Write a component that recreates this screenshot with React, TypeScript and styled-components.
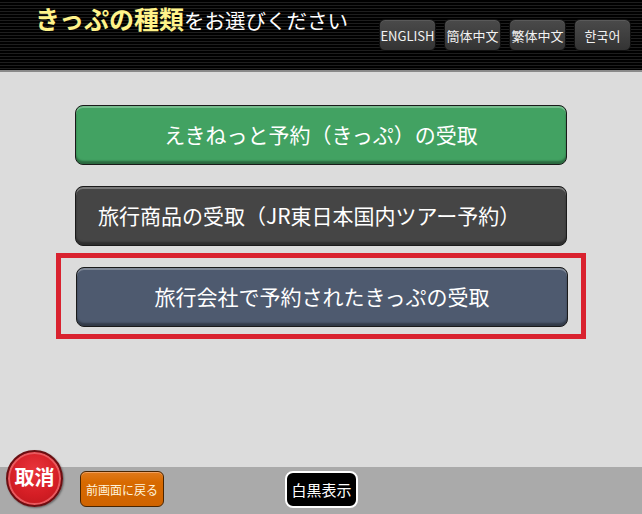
import { createGlobalStyle, styled } from 'styled-components';

const GlobalStyle = createGlobalStyle`
  html, body {
    margin: 0;
    padding: 0;
    background: #dcdcdc;
  }
  body {
    font-family: "Noto Sans CJK JP", "Noto Sans", sans-serif;
  }
  * { box-sizing: border-box; }
`;

const Screen = styled.div`
  width: 642px;
  height: 514px;
  display: flex;
  flex-direction: column;
  overflow: hidden;
`;

const Header = styled.header`
  height: 72px;
  flex: none;
  display: flex;
  justify-content: space-between;
  align-items: flex-start;
  padding: 0 11px 0 35px;
  background:
    repeating-linear-gradient(to bottom, #000 0px, #000 2px, #1e1e1e 2px, #1e1e1e 3px);
  border-bottom: 2px solid #8a8a8a;
`;

const Title = styled.h1`
  margin: 0;
  padding-top: 2px;
  font-weight: normal;
  font-size: 20.5px;
  color: #fff;
  line-height: 32px;
  white-space: nowrap;
  b {
    font-size: 25px;
    color: #fff38a;
    font-weight: bold;
  }
`;

const LangBar = styled.div`
  display: flex;
  gap: 8px;
  margin-top: 19px;
`;

const LangButton = styled.button`
  width: 57px;
  height: 32px;
  padding: 0;
  border: 1px solid #111;
  border-radius: 6px;
  background: linear-gradient(to bottom, #4a4a4a 0%, #3d3d3d 60%, #333 100%);
  box-shadow: inset 0 1px 0 #5a5a5a;
  color: #f2f2f2;
  font-family: "Noto Sans CJK JP", "Noto Sans CJK KR", sans-serif;
  font-size: 13px;
  white-space: nowrap;
`;

const Body = styled.main`
  flex: 1;
  display: flex;
  flex-direction: column;
  align-items: center;
  padding-top: 33px;
`;

const MenuButton = styled.button<{ $bg: string; $left?: boolean }>`
  width: 492px;
  height: 60px;
  flex: none;
  border: 1px solid #1a1a1a;
  border-radius: 8px;
  background: ${p => p.$bg};
  box-shadow: inset 0 2px 0 rgba(255, 255, 255, 0.28), inset 0 -3px 2px rgba(0, 0, 0, 0.35);
  color: #fff;
  font-family: "Noto Sans CJK JP", sans-serif;
  font-size: 21px;
  text-align: ${p => (p.$left ? 'left' : 'center')};
  padding: 0 0 2px ${p => (p.$left ? '22px' : '0')};
  white-space: nowrap;
`;

const Gap = styled.div<{ $h: number }>`
  height: ${p => p.$h}px;
  flex: none;
`;

const Highlight = styled.div`
  width: 530px;
  border: 5px solid #d9222f;
  padding: 9px 13px 7px 15px;
`;

const Footer = styled.footer`
  height: 47px;
  flex: none;
  background: #aaaaaa;
  display: flex;
  align-items: flex-start;
  padding-left: 6px;
`;

const CancelButton = styled.button`
  width: 57px;
  height: 57px;
  margin-top: -17px;
  flex: none;
  border-radius: 50%;
  border: 2px solid #6a0f12;
  background: radial-gradient(circle at 50% 35%, #e8353c 0%, #d51e25 55%, #b8151b 100%);
  box-shadow: inset 0 0 0 2px #e85a5f, 1px 1px 2px rgba(0, 0, 0, 0.4);
  color: #fff;
  font-family: "Noto Sans CJK JP", sans-serif;
  font-weight: bold;
  font-size: 20px;
  padding: 0 0 4px;
  white-space: nowrap;
`;

const BackButton = styled.button`
  width: 84px;
  height: 36px;
  margin: 4px 0 0 17px;
  border: 1px solid #4a2500;
  border-radius: 6px;
  background: linear-gradient(to bottom, #e07a1c 0%, #d86a00 30%, #cf6300 100%);
  box-shadow: inset 0 1px 0 #f0a060;
  color: #fff4dc;
  font-family: "Noto Sans CJK JP", sans-serif;
  font-size: 12px;
  padding: 0;
  white-space: nowrap;
`;

const MonoButton = styled.button`
  width: 73px;
  height: 37px;
  margin: 4px 0 0 121px;
  border: 2px solid #fff;
  border-radius: 8px;
  background: #000;
  color: #fff;
  font-family: "Noto Sans CJK JP", sans-serif;
  font-size: 15px;
  padding: 0 0 1px;
  white-space: nowrap;
`;

const languages = ['ENGLISH', '簡体中文', '繁体中文', '한국어'];

export default function App() {
  return (
    <Screen>
      <GlobalStyle />
      <Header>
        <Title>
          <b>きっぷの種類</b>をお選びください
        </Title>
        <LangBar>
          {languages.map(l => (
            <LangButton key={l}>{l}</LangButton>
          ))}
        </LangBar>
      </Header>
      <Body>
        <MenuButton $bg="#42a262">えきねっと予約（きっぷ）の受取</MenuButton>
        <Gap $h={21} />
        <MenuButton $bg="#454545" $left>旅行商品の受取（JR東日本国内ツアー予約）</MenuButton>
        <Gap $h={7} />
        <Highlight>
          <MenuButton $bg="#4e5a6f">旅行会社で予約されたきっぷの受取</MenuButton>
        </Highlight>
      </Body>
      <Footer>
        <CancelButton>取消</CancelButton>
        <BackButton>前画面に戻る</BackButton>
        <MonoButton>白黒表示</MonoButton>
      </Footer>
    </Screen>
  );
}
